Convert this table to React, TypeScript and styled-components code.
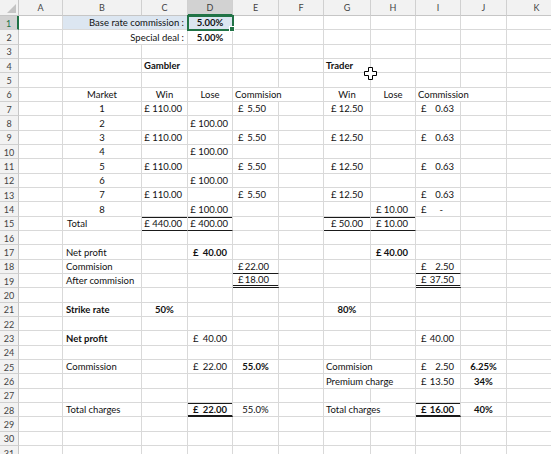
import React from "react";
import styled, { createGlobalStyle, css } from "styled-components";

const GlobalStyle = createGlobalStyle`
  html, body { margin: 0; padding: 0; background: #fff; overflow: hidden; }
  body { font-family: Lato, "Liberation Sans", sans-serif; }
`;

const COL_LETTERS = ["A", "B", "C", "D", "E", "F", "G", "H", "I", "J", "K"];
const COL_WIDTHS = [44, 79, 46, 45, 46, 45, 47, 45, 45, 46, 60];
const ROW_H = 14.33;
const ROWS = 31;

type Border = "thin" | "double" | "thick";
type CellDef = {
  col: string;
  span?: number;
  text?: string;
  acct?: [string, string];
  align?: "left" | "center" | "right";
  bold?: boolean;
  top?: boolean;
  bottom?: Border;
  fill?: boolean;
  selected?: boolean;
  padL?: number;
  padR?: number;
};

const odd = (n: number): CellDef[] => [
  { col: "B", text: String(n), align: "center" },
  { col: "C", text: "£ 110.00", align: "right", padR: 5 },
  { col: "E", acct: ["£", "5.50"], padL: 5, padR: 12 },
  { col: "G", acct: ["£", "12.50"], padL: 7, padR: 7 },
  { col: "I", acct: ["£", "0.63"], padL: 5, padR: 6 },
];
const even = (n: number): CellDef[] => [
  { col: "B", text: String(n), align: "center" },
  { col: "D", text: "£ 100.00", align: "right", padR: 4 },
];

const DATA: Record<number, CellDef[]> = {
  1: [
    { col: "B", span: 2, text: "Base rate commission :", align: "right", fill: true, padR: 3 },
    { col: "D", text: "5.00%", align: "center", bold: true, fill: true, selected: true },
  ],
  2: [
    { col: "B", span: 2, text: "Special deal :", align: "right", padR: 3 },
    { col: "D", text: "5.00%", align: "center", bold: true },
  ],
  4: [
    { col: "C", text: "Gambler", bold: true, padL: 2 },
    { col: "G", text: "Trader", bold: true, padL: 2 },
  ],
  6: [
    { col: "B", text: "Market", align: "center" },
    { col: "C", text: "Win", align: "center" },
    { col: "D", text: "Lose", align: "center" },
    { col: "E", span: 2, text: "Commision", padL: 2 },
    { col: "G", text: "Win", align: "center" },
    { col: "H", text: "Lose", align: "center" },
    { col: "I", span: 2, text: "Commission", padL: 2 },
  ],
  7: odd(1),
  8: even(2),
  9: odd(3),
  10: even(4),
  11: odd(5),
  12: even(6),
  13: odd(7),
  14: [
    { col: "B", text: "8", align: "center" },
    { col: "D", text: "£ 100.00", align: "right", padR: 4 },
    { col: "H", acct: ["£", "10.00"], padL: 5, padR: 7 },
    { col: "I", acct: ["£", "-"], padL: 5, padR: 17 },
  ],
  15: [
    { col: "B", text: "Total", padL: 4 },
    { col: "C", text: "£ 440.00", align: "right", padR: 5, top: true, bottom: "thin" },
    { col: "D", text: "£ 400.00", align: "right", padR: 4, top: true, bottom: "thin" },
    { col: "G", acct: ["£", "50.00"], padL: 7, padR: 7, top: true, bottom: "thin" },
    { col: "H", acct: ["£", "10.00"], padL: 5, padR: 7, top: true, bottom: "thin" },
  ],
  17: [
    { col: "B", text: "Net profit", padL: 3 },
    { col: "D", acct: ["£", "40.00"], bold: true, padL: 5, padR: 5 },
    { col: "H", acct: ["£", "40.00"], bold: true, padL: 5, padR: 7 },
  ],
  18: [
    { col: "B", text: "Commision", padL: 3 },
    { col: "E", acct: ["£", "22.00"], padL: 5, padR: 9, bottom: "thin" },
    { col: "I", acct: ["£", "2.50"], padL: 5, padR: 6, bottom: "thin" },
  ],
  19: [
    { col: "B", text: "After commision", padL: 3 },
    { col: "E", acct: ["£", "18.00"], padL: 5, padR: 9, bottom: "double" },
    { col: "I", acct: ["£", "37.50"], padL: 5, padR: 6, bottom: "double" },
  ],
  21: [
    { col: "B", text: "Strike rate", bold: true, padL: 3 },
    { col: "C", text: "50%", bold: true, align: "center" },
    { col: "G", text: "80%", bold: true, align: "center" },
  ],
  23: [
    { col: "B", text: "Net profit", bold: true, padL: 3 },
    { col: "D", acct: ["£", "40.00"], padL: 5, padR: 5 },
    { col: "I", acct: ["£", "40.00"], padL: 5, padR: 6 },
  ],
  25: [
    { col: "B", text: "Commission", padL: 3 },
    { col: "D", acct: ["£", "22.00"], padL: 5, padR: 5 },
    { col: "E", text: "55.0%", bold: true, align: "center" },
    { col: "G", span: 2, text: "Commision", padL: 2 },
    { col: "I", acct: ["£", "2.50"], padL: 5, padR: 6 },
    { col: "J", text: "6.25%", bold: true, align: "center" },
  ],
  26: [
    { col: "G", span: 2, text: "Premium charge", padL: 2 },
    { col: "I", acct: ["£", "13.50"], padL: 5, padR: 6 },
    { col: "J", text: "34%", bold: true, align: "center" },
  ],
  28: [
    { col: "B", text: "Total charges", padL: 3 },
    { col: "D", acct: ["£", "22.00"], bold: true, padL: 5, padR: 5, top: true, bottom: "thick" },
    { col: "E", text: "55.0%", align: "center" },
    { col: "G", span: 2, text: "Total charges", padL: 2 },
    { col: "I", acct: ["£", "16.00"], bold: true, padL: 5, padR: 6, top: true, bottom: "thick" },
    { col: "J", text: "40%", bold: true, align: "center" },
  ],
};

const Sheet = styled.div`
  position: relative;
  display: grid;
  grid-template-columns: 19px ${COL_WIDTHS.map((w) => `${w}px`).join(" ")};
  grid-template-rows: 16px repeat(${ROWS}, ${ROW_H}px);
  width: 551px;
  height: 454px;
  overflow: hidden;
  background: #fff;
`;

const Corner = styled.div`
  background: #f2f2f2;
  border-right: 1px solid #c6c6c6;
  border-bottom: 1px solid #c6c6c6;
  box-sizing: border-box;
  display: flex;
  align-items: flex-end;
  justify-content: flex-end;
  padding: 0 2px 2px 0;
`;

const ColHead = styled.div<{ $active?: boolean }>`
  box-sizing: border-box;
  background: ${(p) => (p.$active ? "#d2d2d2" : "#f2f2f2")};
  border-right: 1px solid #d0d0d0;
  border-bottom: ${(p) => (p.$active ? "2px solid #217346" : "1px solid #c6c6c6")};
  color: ${(p) => (p.$active ? "#3c3c3c" : "#444")};
  font-size: 9px;
  display: flex;
  align-items: center;
  justify-content: center;
  padding-top: ${(p) => (p.$active ? "1px" : "0")};
`;

const RowHead = styled.div<{ $active?: boolean }>`
  box-sizing: border-box;
  background: ${(p) => (p.$active ? "#d2d2d2" : "#f2f2f2")};
  border-right: ${(p) => (p.$active ? "2px solid #217346" : "1px solid #c6c6c6")};
  border-bottom: 1px solid #d0d0d0;
  color: ${(p) => (p.$active ? "#217346" : "#444")};
  font-size: 9px;
  display: flex;
  align-items: center;
  justify-content: center;
  padding-top: 1px;
`;

const bottomBorder = (b?: Border) => {
  if (b === "thin") return "1px solid #1a1a1a";
  if (b === "double") return "3px double #1a1a1a";
  if (b === "thick") return "2px solid #1a1a1a";
  return "1px solid #d9d9d9";
};

const Cell = styled.div<{
  $align?: string;
  $bold?: boolean;
  $fill?: boolean;
  $top?: boolean;
  $bottom?: Border;
  $selected?: boolean;
  $padL?: number;
  $padR?: number;
}>`
  box-sizing: border-box;
  min-width: 0;
  border-right: 1px solid #d9d9d9;
  border-bottom: ${(p) => bottomBorder(p.$bottom)};
  background: ${(p) => (p.$fill ? "#dce6f1" : "#fff")};
  ${(p) => p.$top && css`box-shadow: inset 0 1px 0 #1a1a1a;`}
  font-size: 9.5px;
  line-height: 11px;
  color: #111;
  font-weight: ${(p) => (p.$bold ? 700 : 400)};
  white-space: nowrap;
  overflow: hidden;
  display: flex;
  align-items: flex-end;
  justify-content: ${(p) =>
    p.$align === "center" ? "center" : p.$align === "right" ? "flex-end" : "flex-start"};
  padding: 0 ${(p) => p.$padR ?? 0}px ${(p) => (p.$bottom === "double" || p.$bottom === "thick" ? 0 : 1)}px
    ${(p) => p.$padL ?? 0}px;
  ${(p) =>
    p.$selected &&
    css`
      position: relative;
      overflow: visible;
      outline: 2px solid #217346;
      outline-offset: -1px;
      z-index: 2;
      &::after {
        content: "";
        position: absolute;
        right: -3px;
        bottom: -3px;
        width: 4px;
        height: 4px;
        background: #217346;
        border: 1px solid #fff;
      }
    `}
`;

const Acct = styled.span`
  display: flex;
  width: 100%;
  justify-content: space-between;
`;

const Cursor = styled.svg`
  position: absolute;
  left: 364px;
  top: 67px;
  z-index: 3;
`;

function renderRow(r: number) {
  const defs = DATA[r] || [];
  const out: React.ReactNode[] = [];
  let i = 0;
  while (i < COL_LETTERS.length) {
    const letter = COL_LETTERS[i];
    const d = defs.find((x) => x.col === letter);
    const span = d?.span ?? 1;
    out.push(
      <Cell
        key={`${r}-${letter}`}
        style={span > 1 ? { gridColumn: `span ${span}` } : undefined}
        $align={d?.align}
        $bold={d?.bold}
        $fill={d?.fill}
        $top={d?.top}
        $bottom={d?.bottom}
        $selected={d?.selected}
        $padL={d?.padL}
        $padR={d?.padR}
      >
        {d?.acct ? (
          <Acct>
            <span>{d.acct[0]}</span>
            <span>{d.acct[1]}</span>
          </Acct>
        ) : (
          d?.text
        )}
      </Cell>
    );
    i += span;
  }
  return out;
}

export default function App() {
  const rows = Array.from({ length: ROWS }, (_, k) => k + 1);
  return (
    <>
      <GlobalStyle />
      <Sheet>
        <Corner>
          <svg width="9" height="9" viewBox="0 0 9 9">
            <polygon points="9,0 9,9 0,9" fill="#c4c4c4" />
          </svg>
        </Corner>
        {COL_LETTERS.map((l) => (
          <ColHead key={l} $active={l === "D"}>
            {l}
          </ColHead>
        ))}
        {rows.map((r) => (
          <React.Fragment key={r}>
            <RowHead $active={r === 1}>{r}</RowHead>
            {renderRow(r)}
          </React.Fragment>
        ))}
        <Cursor width="13" height="13" viewBox="0 0 13 13">
          <path
            d="M4.5 0.5 H8.5 V4.5 H12.5 V8.5 H8.5 V12.5 H4.5 V8.5 H0.5 V4.5 H4.5 Z"
            fill="#fff"
            stroke="#000"
            strokeWidth="1"
          />
        </Cursor>
      </Sheet>
    </>
  );
}
